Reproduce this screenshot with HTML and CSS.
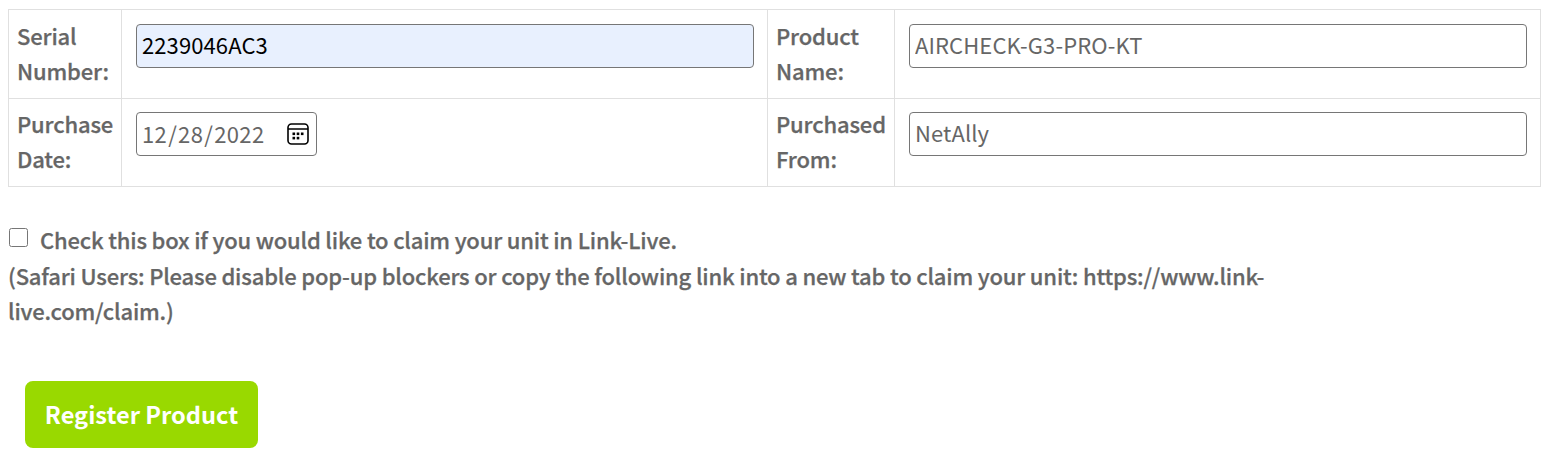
FILE: index.html
```html
<!DOCTYPE html>
<html lang="en">
<head>
<meta charset="utf-8">
<title>Register Product</title>
<link rel="stylesheet" href="styles.css">
</head>
<body>
<form class="form">
  <table class="fields">
    <colgroup><col class="c1"><col class="c2"><col class="c3"><col class="c4"></colgroup>
    <tr>
      <th>Serial Number:</th>
      <td><input class="field autofilled" type="text" value="2239046AC3"></td>
      <th>Product Name:</th>
      <td><input class="field" type="text" value="AIRCHECK-G3-PRO-KT"></td>
    </tr>
    <tr class="second">
      <th>Purchase Date:</th>
      <td><input class="field date" type="date" value="2022-12-28"></td>
      <th>Purchased From:</th>
      <td><input class="field" type="text" value="NetAlly"></td>
    </tr>
  </table>
  <div class="claim">
    <div class="claim-first"><input class="check" type="checkbox">Check this box if you would like to claim your unit in Link-Live.</div>
    <div>(Safari Users: Please disable pop-up blockers or copy the following link into a new tab to claim your unit: https://www.link-live.com/claim.)</div>
  </div>
  <button class="submit" type="button">Register Product</button>
</form>
</body>
</html>
```
FILE: styles.css
```css
html, body { margin: 0; padding: 0; background: #fff; }
body {
  padding: 9px 8px 0;
  font-family: "Noto Sans CJK SC", "Noto Sans", sans-serif;
  font-size: 22px;
  line-height: 35px;
  color: #666;
}
.fields {
  width: 1533px;
  table-layout: fixed;
  border-collapse: collapse;
}
.c1 { width: 113px; }
.c2 { width: 646px; }
.c3 { width: 127px; }
.fields th, .fields td {
  border: 1px solid #e0e0e0;
  padding: 8px 0 10px 8px;
  text-align: left;
  vertical-align: top;
}
.fields th {
  font-weight: 500;
  letter-spacing: -0.15px;
  -webkit-text-stroke: 0.25px #666;
}
.fields td { padding: 14px 13px 0 14px; }
.second th { padding-top: 7px; }
.fields .second td { padding-top: 13px; }
.field {
  display: block;
  box-sizing: border-box;
  width: 100%;
  height: 44px;
  padding: 0 5px 5px;
  border: 1px solid #767676;
  border-radius: 4px;
  background: #fff;
  font: inherit;
  letter-spacing: 0.1px;
  -webkit-text-stroke: 0;
  color: #666;
  outline: none;
}
.autofilled { background: #e8f0fe; color: #000; }
.date { width: 181px; padding-left: 4px; padding-bottom: 1px; letter-spacing: 0.35px; }
.date::-webkit-calendar-picker-indicator {
  width: 22px;
  height: 22px;
  padding: 0;
  margin: 0 2px 0 0;
  background: url("data:image/svg+xml,%3Csvg xmlns='http://www.w3.org/2000/svg' viewBox='0 0 22 22'%3E%3Crect x='1' y='1' width='20' height='20' rx='3.5' fill='none' stroke='%23000' stroke-width='1.6'/%3E%3Cpath d='M1 6h20' stroke='%23000' stroke-width='1.6'/%3E%3Cg fill='%23000'%3E%3Crect x='5.5' y='9.5' width='2.6' height='2.6'/%3E%3Crect x='9.7' y='9.5' width='2.6' height='2.6'/%3E%3Crect x='13.9' y='9.5' width='2.6' height='2.6'/%3E%3Crect x='5.5' y='13.8' width='2.6' height='2.6'/%3E%3Crect x='9.7' y='13.8' width='2.6' height='2.6'/%3E%3C/g%3E%3C/svg%3E") center / contain no-repeat;
}
.claim {
  margin: 35px 0 0;
  width: 1270px;
  font-weight: 500;
  letter-spacing: -0.18px;
  -webkit-text-stroke: 0.25px #666;
}
.claim-first { margin-bottom: 1px; }
.check {
  width: 19px;
  height: 19px;
  margin: 0 12px 0 1px;
  vertical-align: 2px;
}
.submit {
  display: block;
  margin: 53px 0 0 17px;
  width: 233px;
  height: 67px;
  border: 0;
  border-radius: 8px;
  background: #99d900;
  color: #fff;
  font: 700 23.6px/35px "Noto Sans CJK SC", "Noto Sans", sans-serif;
}
```
